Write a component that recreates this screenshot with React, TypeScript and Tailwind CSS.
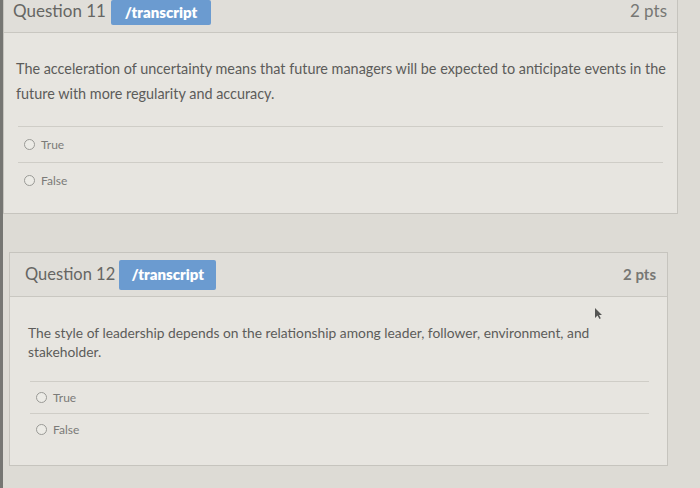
import React from 'react';

const font = { fontFamily: 'Lato, "Open Sans", sans-serif' };

function Radio({ label, className }: { label: string; className?: string }) {
  return (
    <div className={`flex items-center gap-[6px] ${className ?? ''}`}>
      <span className="h-[11px] w-[11px] rounded-full border border-[#9a9a96] bg-[#ecebe6]" />
      <span className="text-[12px] text-[#7b7b78]">{label}</span>
    </div>
  );
}

function Badge({ className }: { className: string }) {
  return (
    <span
      className={`flex items-center justify-center rounded-[2px] bg-[#6b9bd0] font-extrabold text-white ${className}`}
    >
      /transcript
    </span>
  );
}

export default function App() {
  return (
    <div
      className="flex h-[488px] w-[700px] overflow-hidden bg-[#dddbd5]"
      style={font}
    >
      {/* screen bezel edge */}
      <div className="w-[3px] shrink-0 bg-[#767673]" />

      <div className="flex flex-col">
        {/* Question 11 */}
        <section className="w-[675px] border-x border-b border-[#c6c4be] bg-[#e7e5e0]">
          <header className="flex h-[33px] items-start border-b border-[#c9c7c1] bg-[#e0ded9] pl-[9px] pr-[10px]">
            <span className="mt-[-2px] text-[17px] text-[#666663]">Question 11</span>
            <Badge className="ml-[5px] h-[25px] w-[100px] text-[15px]" />
            <span className="ml-auto mt-[-2px] text-[17px] text-[#777774]">2 pts</span>
          </header>
          <div className="px-[12px] pb-[15px] pt-[23px]">
            <p className="w-[652px] text-[14.4px] leading-[25px] text-[#5c5c5a]">
              The acceleration of uncertainty means that future managers will be expected to anticipate
              events in the future with more regularity and accuracy.
            </p>
            <div className="mx-[2px] mt-[20px] border-t border-[#cfcdc7]">
              <Radio label="True" className="h-[35px] pl-[6px]" />
              <div className="border-t border-[#cfcdc7]" />
              <Radio label="False" className="h-[35px] pl-[6px]" />
            </div>
          </div>
        </section>

        {/* Question 12 */}
        <section className="ml-[6px] mt-[38px] w-[659px] border border-[#c6c4be] bg-[#e7e5e0]">
          <header className="flex h-[44px] items-center border-b border-[#c9c7c1] bg-[#e0ded9] pl-[15px] pr-[11px]">
            <span className="text-[16.5px] text-[#666663]">Question 12</span>
            <Badge className="ml-[4px] h-[30px] w-[97px] text-[15px]" />
            <span className="ml-auto text-[15px] font-bold text-[#777774]">2 pts</span>
          </header>
          <div className="relative px-[18px] pb-[20px] pt-[26px]">
            <svg
              className="absolute left-[584px] top-[10px]"
              width="9"
              height="13"
              viewBox="0 0 9 13"
            >
              <path d="M1 1 L1 11 L3.5 8.5 L5.5 12 L6.8 11.3 L5 8 L8 8 Z" fill="#555553" />
            </svg>
            <p className="w-[580px] text-[13.8px] leading-[19px] text-[#5c5c5a]">
              The style of leadership depends on the relationship among leader, follower, environment, and
              stakeholder.
            </p>
            <div className="ml-[2px] mt-[20px] border-t border-[#cfcdc7]">
              <Radio label="True" className="h-[31px] pl-[6px]" />
              <div className="border-t border-[#cfcdc7]" />
              <Radio label="False" className="h-[31px] pl-[6px]" />
            </div>
          </div>
        </section>
      </div>
    </div>
  );
}
